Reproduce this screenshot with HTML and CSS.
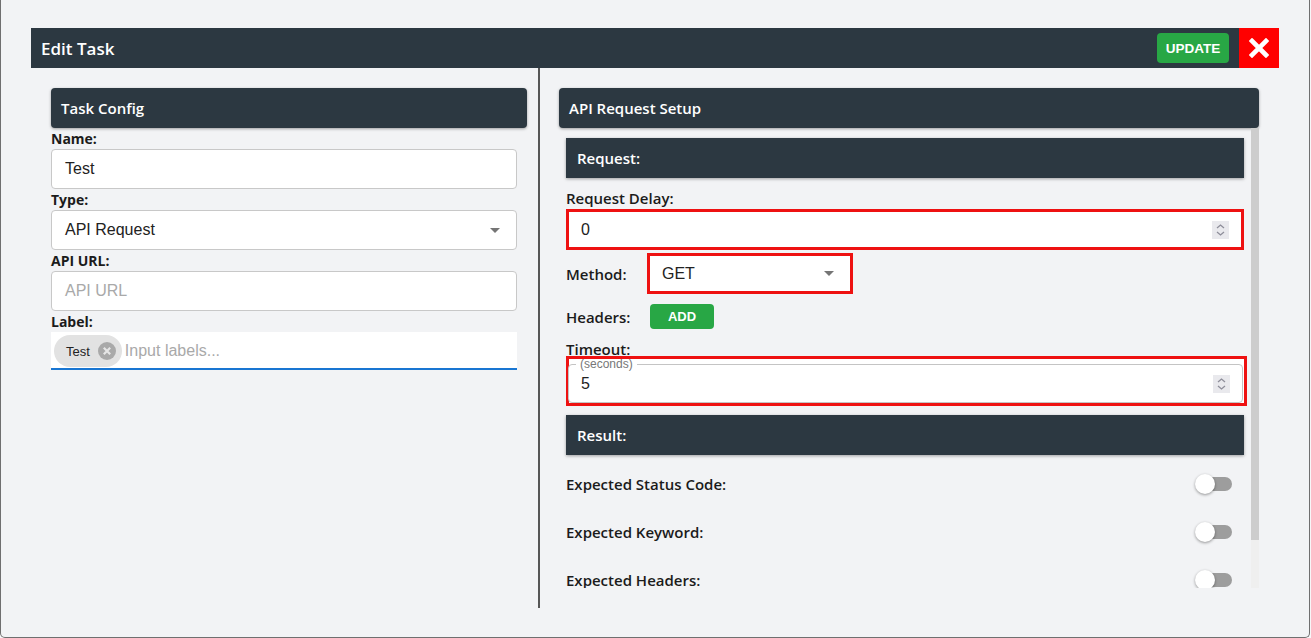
FILE: index.html
```html
<!DOCTYPE html>
<html>
<head>
<meta charset="utf-8">
<link rel="stylesheet" href="styles.css">
</head>
<body>
<div class="modal">
  <div class="titlebar">
    <div class="title">Edit Task</div>
    <button class="btn-update">UPDATE</button>
    <button class="btn-close" aria-label="close">
      <svg width="20" height="20" viewBox="0 0 20 20"><path d="M3 3 L17 17 M17 3 L3 17" stroke="#fff" stroke-width="4.6" stroke-linecap="square"/></svg>
    </button>
  </div>
  <div class="body">
    <div class="col-left">
      <div class="panel-head">Task Config</div>
      <div class="form">
        <div class="lbl">Name:</div>
        <div class="field"><span class="val">Test</span></div>
        <div class="lbl">Type:</div>
        <div class="field select"><span class="val">API Request</span><span class="caret"></span></div>
        <div class="lbl">API URL:</div>
        <div class="field"><span class="ph">API URL</span></div>
        <div class="lbl">Label:</div>
        <div class="chips">
          <span class="chip">Test<span class="chip-x"><svg width="18" height="18" viewBox="0 0 18 18"><circle cx="9" cy="9" r="9" fill="#a9a9a9"/><path d="M5.8 5.8 L12.2 12.2 M12.2 5.8 L5.8 12.2" stroke="#e6e6e6" stroke-width="2.2"/></svg></span></span>
          <span class="ph chip-ph">Input labels...</span>
        </div>
      </div>
    </div>
    <div class="divider"></div>
    <div class="col-right">
      <div class="panel-head">API Request Setup</div>
      <div class="scroll-wrap">
        <div class="scroll">
          <div class="section-head">Request:</div>
          <div class="rlabel">Request Delay:</div>
          <div class="num red">
            <span class="val">0</span>
            <span class="spin"><svg width="17" height="18" viewBox="0 0 17 18"><path d="M5 7 L8.5 4 L12 7 M5 11 L8.5 14 L12 11" fill="none" stroke="#8e8e9a" stroke-width="1.3"/></svg></span>
          </div>
          <div class="row method-row">
            <span class="rlabel-inline method-lbl">Method:</span>
            <div class="method red"><span class="val">GET</span><span class="caret"></span></div>
          </div>
          <div class="row headers-row">
            <span class="rlabel-inline headers-lbl">Headers:</span>
            <button class="btn-add">ADD</button>
          </div>
          <div class="rlabel timeout-lbl">Timeout:</div>
          <div class="timeout red">
            <fieldset class="outlined">
              <legend>(seconds)</legend>
              <div class="fs-row">
                <span class="val">5</span>
                <span class="spin"><svg width="17" height="18" viewBox="0 0 17 18"><path d="M5 7 L8.5 4 L12 7 M5 11 L8.5 14 L12 11" fill="none" stroke="#8e8e9a" stroke-width="1.3"/></svg></span>
              </div>
            </fieldset>
          </div>
          <div class="section-head result-head">Result:</div>
          <div class="toggle-row first"><span>Expected Status Code:</span><span class="switch"><span class="thumb"></span></span></div>
          <div class="toggle-row"><span>Expected Keyword:</span><span class="switch"><span class="thumb"></span></span></div>
          <div class="toggle-row last"><span>Expected Headers:</span><span class="switch"><span class="thumb"></span></span></div>
        </div>
        <div class="vbar"><div class="vbar-thumb"></div><div class="vbar-track"></div></div>
      </div>
    </div>
  </div>
</div>
</body>
</html>
```
FILE: styles.css
```css
* { box-sizing: border-box; }
html, body { margin: 0; padding: 0; }
body {
  background: #f7f7f8;
  font-family: "Open Sans", "Noto Sans", sans-serif;
  color: #1b1b1b;
  width: 1311px;
  height: 638px;
  overflow: hidden;
}
.modal {
  width: 1310px;
  height: 638px;
  background: #f2f3f5;
  border-left: 1px solid #6f6f6f;
  border-right: 1px solid #6f6f6f;
  border-bottom: 1px solid #6f6f6f;
  border-radius: 0 0 5px 5px;
  padding: 28px 30px 0 30px;
}
.titlebar {
  height: 40px;
  background: #2c3841;
  display: flex;
  align-items: center;
  padding-left: 10px;
}
.title {
  flex: 1;
  color: #fff;
  font-size: 17px;
  font-weight: 600;
}
.btn-update {
  width: 72px;
  height: 30px;
  margin-right: 10px;
  border: 0;
  border-radius: 4px;
  background: #28a745;
  color: #fff;
  font-family: "Liberation Sans", Arial, sans-serif;
  font-weight: 700;
  font-size: 13.5px;
  padding: 0;
}
.btn-close {
  width: 40px;
  height: 40px;
  border: 0;
  background: #ff0000;
  padding: 0;
  display: flex;
  align-items: center;
  justify-content: center;
}
.body {
  display: flex;
  height: 540px;
}
.col-left {
  width: 507px;
  padding: 20px 11px 0 20px;
}
.divider {
  width: 2px;
  background: #565656;
}
.col-right {
  flex: 1;
  padding: 20px 20px 0 19px;
}
.panel-head {
  height: 40px;
  background: #2c3841;
  color: #fff;
  font-size: 15px;
  font-weight: 600;
  line-height: 40px;
  padding-left: 10px;
  border-radius: 4px;
  box-shadow: 0 1px 3px rgba(0,0,0,0.35);
}
.form { margin-right: 10px; }
.lbl {
  font-size: 14px;
  font-weight: 700;
  line-height: 21px;
}
.field {
  height: 40px;
  background: #fff;
  border: 1px solid #c8c8c8;
  border-radius: 4px;
  display: flex;
  align-items: center;
  padding: 0 16px 0 13px;
  font-family: "Liberation Sans", Arial, sans-serif;
  font-size: 16px;
}
.val { flex: 1; color: #222; font-family: "Liberation Sans", Arial, sans-serif; font-size: 16px; }
.ph { color: #a9a9a9; font-family: "Liberation Sans", Arial, sans-serif; font-size: 16px; }
.caret {
  width: 0; height: 0;
  border-left: 5px solid transparent;
  border-right: 5px solid transparent;
  border-top: 5px solid #757575;
}
.chips {
  height: 38px;
  background: #fff;
  border-bottom: 2px solid #1976d2;
  display: flex;
  align-items: flex-start;
  padding: 3px 0 0 3px;
}
.chip {
  height: 32px;
  border-radius: 16px;
  background: #e2e2e2;
  display: inline-flex;
  align-items: center;
  padding: 0 6px 0 12px;
  font-family: "Liberation Sans", Arial, sans-serif;
  font-size: 13px;
  color: #222;
}
.chip-x { display: inline-flex; margin-left: 8px; }
.chip-ph { margin-left: 3px; line-height: 32px; }

.scroll-wrap {
  display: flex;
  height: 460px;
}
.scroll {
  flex: 1;
  min-width: 0;
  overflow: hidden;
  padding: 10px 7px 0 7px;
}
.vbar {
  width: 8px;
  display: flex;
  flex-direction: column;
}
.vbar-thumb { height: 412px; background: #cdcdcd; }
.vbar-track { height: 48px; background: #efefef; }
.section-head {
  height: 40px;
  background: #2c3841;
  color: #fff;
  font-size: 15px;
  font-weight: 600;
  line-height: 40px;
  padding-left: 11px;
  box-shadow: 0 1px 3px rgba(0,0,0,0.35);
}
.rlabel {
  margin-top: 10px;
  font-size: 15px;
  font-weight: 600;
  line-height: 21px;
}
.rlabel-inline {
  font-size: 15px;
  font-weight: 600;
}
.red { border: 3px solid #ee1111; background: #fff; }
.num {
  height: 41px;
  display: flex;
  align-items: center;
  padding: 0 12px;
}
.spin {
  width: 17px; height: 18px;
  background: #e9e9ed;
  display: inline-flex;
}
.row { display: flex; align-items: center; }
.method-row { margin-top: 3px; }
.method-lbl { width: 81px; }
.method {
  width: 206px;
  height: 41px;
  display: flex;
  align-items: center;
  padding: 0 16px 0 12px;
}
.headers-row { margin-top: 10px; height: 25px; }
.headers-lbl { width: 84px; }
.btn-add {
  width: 64px;
  height: 25px;
  border: 0;
  border-radius: 4px;
  background: #28a745;
  color: #fff;
  font-family: "Liberation Sans", Arial, sans-serif;
  font-weight: 700;
  font-size: 13px;
  padding: 0;
}
.timeout-lbl { margin-bottom: -4px; position: relative; }
.timeout {
  width: calc(100% + 3px);
  height: 50px;
}
.outlined {
  margin: -1px 1px 0 -1px;
  padding: 0 12px 5px 12px;
  border: 1px solid #c4c4c4;
  border-radius: 4px;
  min-width: 0;
}
.outlined legend {
  font-family: "Liberation Sans", Arial, sans-serif;
  font-size: 12px;
  line-height: 12px;
  color: #777;
  padding: 0 4px;
  margin-left: -5px;
}
.fs-row {
  height: 27px;
  display: flex;
  align-items: center;
}
.result-head { margin-top: 9px; }
.toggle-row {
  height: 48px;
  display: flex;
  align-items: center;
  justify-content: space-between;
  padding-right: 12px;
  font-size: 15px;
  font-weight: 600;
  line-height: 16px;
}
.toggle-row.first { margin-top: 5px; }
.toggle-row.last {
  height: 31px;
  padding-top: 16px;
}
.switch {
  position: relative;
  width: 37px;
  height: 14px;
  display: inline-block;
}
.switch::before {
  content: "";
  position: absolute;
  left: 3px; top: 0;
  width: 34px; height: 14px;
  border-radius: 7px;
  background: #9d9d9d;
}
.thumb {
  position: absolute;
  left: 0; top: -3px;
  width: 20px; height: 20px;
  border-radius: 50%;
  background: #fff;
  box-shadow: 0 1px 3px rgba(0,0,0,0.4);
}
```
